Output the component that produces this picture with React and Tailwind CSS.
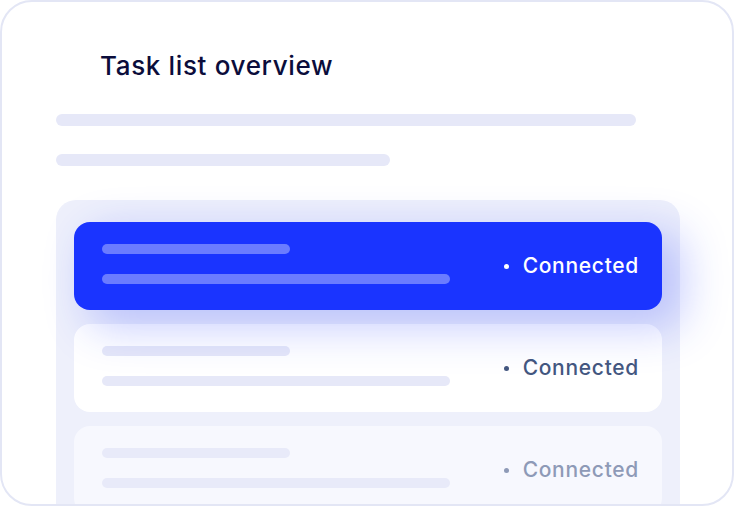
import React from "react";

const rows = [
  {
    card: "bg-[#1a34ff] shadow-[18px_14px_44px_4px_rgba(40,60,255,0.26)] relative z-10",
    bar: "bg-[#6b7cff]",
    text: "text-white",
  },
  {
    card: "bg-white",
    bar: "bg-[#e6e8f8]",
    text: "text-[#44577f]",
  },
  {
    card: "bg-[#f7f8fe]",
    bar: "bg-[#e8eaf9]",
    text: "text-[#8e9ab7]",
  },
];

const App = () => {
  return (
    <div
      className="w-[734px] h-[507px] bg-white"
      style={{ fontFamily: "Inter, 'Noto Sans', sans-serif" }}
    >
      <div className="h-[506px] w-[734px] border-2 border-[#e3e6f5] rounded-[32px] overflow-hidden bg-white">
        <h1 className="pl-[98px] pt-[46px] text-[26px] leading-[36px] font-medium text-[#0b0d3b] tracking-[0.65px]">
          Task list overview
        </h1>

        <div className="pl-[54px] mt-[30px]">
          <div className="h-3 w-[580px] rounded-full bg-[#e6e8f8]" />
          <div className="h-3 w-[334px] rounded-full bg-[#e6e8f8] mt-7" />
        </div>

        <div className="ml-[54px] mt-[34px] w-[624px] h-[400px] rounded-[20px] bg-[#eef0fb] px-[18px] pt-[22px] flex flex-col gap-[14px]">
          {rows.map((row, i) => (
            <div
              key={i}
              className={`h-[88px] shrink-0 rounded-[16px] flex items-center pl-7 pr-[23px] ${row.card}`}
            >
              <div className="flex-1 flex flex-col gap-5 mb-1">
                <div className={`h-2.5 w-[188px] rounded-full ${row.bar}`} />
                <div className={`h-2.5 w-[348px] rounded-full ${row.bar}`} />
              </div>
              <div className={`flex items-center gap-[14px] text-[21px] font-medium tracking-[0.7px] ${row.text}`}>
                <span className="w-[5px] h-[5px] rounded-full bg-current" />
                <span>Connected</span>
              </div>
            </div>
          ))}
        </div>
      </div>
    </div>
  );
};

export default App;
